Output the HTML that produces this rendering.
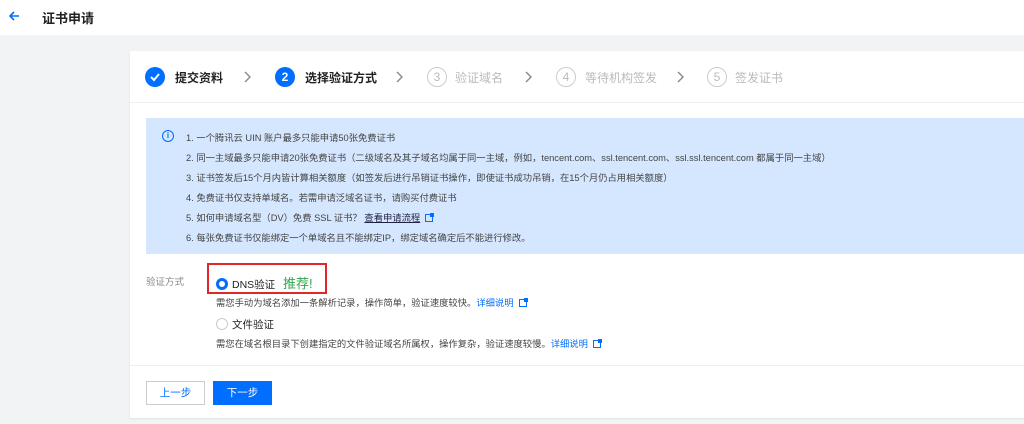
<!DOCTYPE html>
<html><head><meta charset="utf-8"><style>
*{margin:0;padding:0;box-sizing:border-box}
body{width:1024px;height:424px;background:#f2f3f5;font-family:"Liberation Sans","Noto Sans CJK SC",sans-serif;font-size:12px;color:#333;position:relative;overflow:hidden}
.a{position:absolute;white-space:nowrap}
.hdr{left:0;top:0;width:1024px;height:35px;background:#fff}
.card{left:130px;top:51px;width:900px;height:367px;background:#fff;box-shadow:0 1px 2px rgba(0,0,0,.08)}
.circ{width:20px;height:20px;border-radius:50%;text-align:center;line-height:20px;font-size:12px;font-weight:bold}
.on{background:#006eff;color:#fff}
.off{border:1px solid #ccc;color:#bbb;line-height:18px;font-weight:normal}
.st{font-size:12px;top:69px}
.chev{top:71px}
.info{left:146px;top:118px;width:878px;height:136px;background:#d5e7fe}
.il{left:186px;font-size:9.3px;color:#444}
.lnk{color:#006eff}
.ext{display:inline-block;width:8px;height:8px;border:1.5px solid #006eff;margin-left:5px;vertical-align:-1px;position:relative}
.ext:after{content:"";position:absolute;right:-2px;top:-2px;width:4px;height:4px;background:#006eff}
</style></head><body>
<div class="a hdr"></div>
<svg class="a" style="left:8px;top:10px" width="12" height="12" viewBox="0 0 12 12"><path d="M11 6H2M6 2L2 6l4 4" stroke="#006eff" stroke-width="1.6" fill="none"/></svg>
<div class="a" style="left:42px;top:8px;font-size:13px;font-weight:bold;color:#222">证书申请</div>
<div class="a card"></div>
<div class="a" style="left:130px;top:102px;width:894px;height:1px;background:#eee"></div>
<div class="a circ on" style="left:145px;top:67px"><svg width="20" height="20" viewBox="0 0 20 20"><path d="M6 10l3 3 5-6" stroke="#fff" stroke-width="2" fill="none"/></svg></div>
<div class="a st" style="left:175px;font-weight:bold;color:#222">提交资料</div>
<svg class="a chev" style="left:243px" width="8" height="12" viewBox="0 0 8 12"><path d="M2 1l5 5-5 5" stroke="#888" stroke-width="1.4" fill="none"/></svg>
<div class="a circ on" style="left:275px;top:67px">2</div>
<div class="a st" style="left:305px;font-weight:bold;color:#222">选择验证方式</div>
<svg class="a chev" style="left:395px" width="8" height="12" viewBox="0 0 8 12"><path d="M2 1l5 5-5 5" stroke="#888" stroke-width="1.4" fill="none"/></svg>
<div class="a circ off" style="left:427px;top:67px">3</div>
<div class="a st" style="left:455px;color:#bbb">验证域名</div>
<svg class="a chev" style="left:524px" width="8" height="12" viewBox="0 0 8 12"><path d="M2 1l5 5-5 5" stroke="#888" stroke-width="1.4" fill="none"/></svg>
<div class="a circ off" style="left:556px;top:67px">4</div>
<div class="a st" style="left:585px;color:#bbb">等待机构签发</div>
<svg class="a chev" style="left:676px" width="8" height="12" viewBox="0 0 8 12"><path d="M2 1l5 5-5 5" stroke="#888" stroke-width="1.4" fill="none"/></svg>
<div class="a circ off" style="left:707px;top:67px">5</div>
<div class="a st" style="left:735px;color:#bbb">签发证书</div>
<div class="a info"></div>
<div class="a" style="left:162px;top:130px;width:12px;height:12px;border:1.5px solid #006eff;border-radius:50%;color:#006eff;font-size:8px;text-align:center;line-height:9px;font-weight:bold">i</div>
<div class="a il" style="top:130px">1. 一个腾讯云 UIN 账户最多只能申请50张免费证书</div>
<div class="a il" style="top:150px">2. 同一主域最多只能申请20张免费证书（二级域名及其子域名均属于同一主域，例如，tencent.com、ssl.tencent.com、ssl.ssl.tencent.com 都属于同一主域）</div>
<div class="a il" style="top:170px">3. 证书签发后15个月内皆计算相关额度（如签发后进行吊销证书操作，即使证书成功吊销，在15个月仍占用相关额度）</div>
<div class="a il" style="top:190px">4. 免费证书仅支持单域名。若需申请泛域名证书，请购买付费证书</div>
<div class="a il" style="top:210px">5. 如何申请域名型（DV）免费 SSL 证书？ <span style="color:#224;text-decoration:underline">查看申请流程</span><span class="ext"></span></div>
<div class="a il" style="top:230px">6. 每张免费证书仅能绑定一个单域名且不能绑定IP，绑定域名确定后不能进行修改。</div>
<div class="a" style="left:146px;top:274px;font-size:9.5px;color:#888">验证方式</div>
<div class="a" style="left:207px;top:263px;width:120px;height:31px;border:2px solid #e3262a"></div>
<div class="a" style="left:216px;top:278px;width:12px;height:12px;border-radius:50%;border:3.5px solid #006eff"></div>
<div class="a" style="left:232px;top:277px;font-size:10.5px;color:#222">DNS验证</div>
<div class="a" style="left:283px;top:273px;font-size:13px;color:#2ea84a">推荐!</div>
<div class="a" style="left:216px;top:295px;font-size:9.3px;color:#444">需您手动为域名添加一条解析记录，操作简单，验证速度较快。<span class="lnk">详细说明</span><span class="ext"></span></div>
<div class="a" style="left:216px;top:318px;width:12px;height:12px;border-radius:50%;border:1px solid #ccc"></div>
<div class="a" style="left:232px;top:317px;font-size:10.5px;color:#222">文件验证</div>
<div class="a" style="left:216px;top:336px;font-size:9.3px;color:#444">需您在域名根目录下创建指定的文件验证域名所属权，操作复杂，验证速度较慢。<span class="lnk">详细说明</span><span class="ext"></span></div>
<div class="a" style="left:130px;top:365px;width:894px;height:1px;background:#eee"></div>
<div class="a" style="left:146px;top:381px;width:59px;height:24px;border:1px solid #ccc;color:#006eff;text-align:center;line-height:22px;font-size:10.5px">上一步</div>
<div class="a" style="left:213px;top:381px;width:59px;height:24px;background:#006eff;color:#fff;text-align:center;line-height:24px;font-size:10.5px">下一步</div>
</body></html>
